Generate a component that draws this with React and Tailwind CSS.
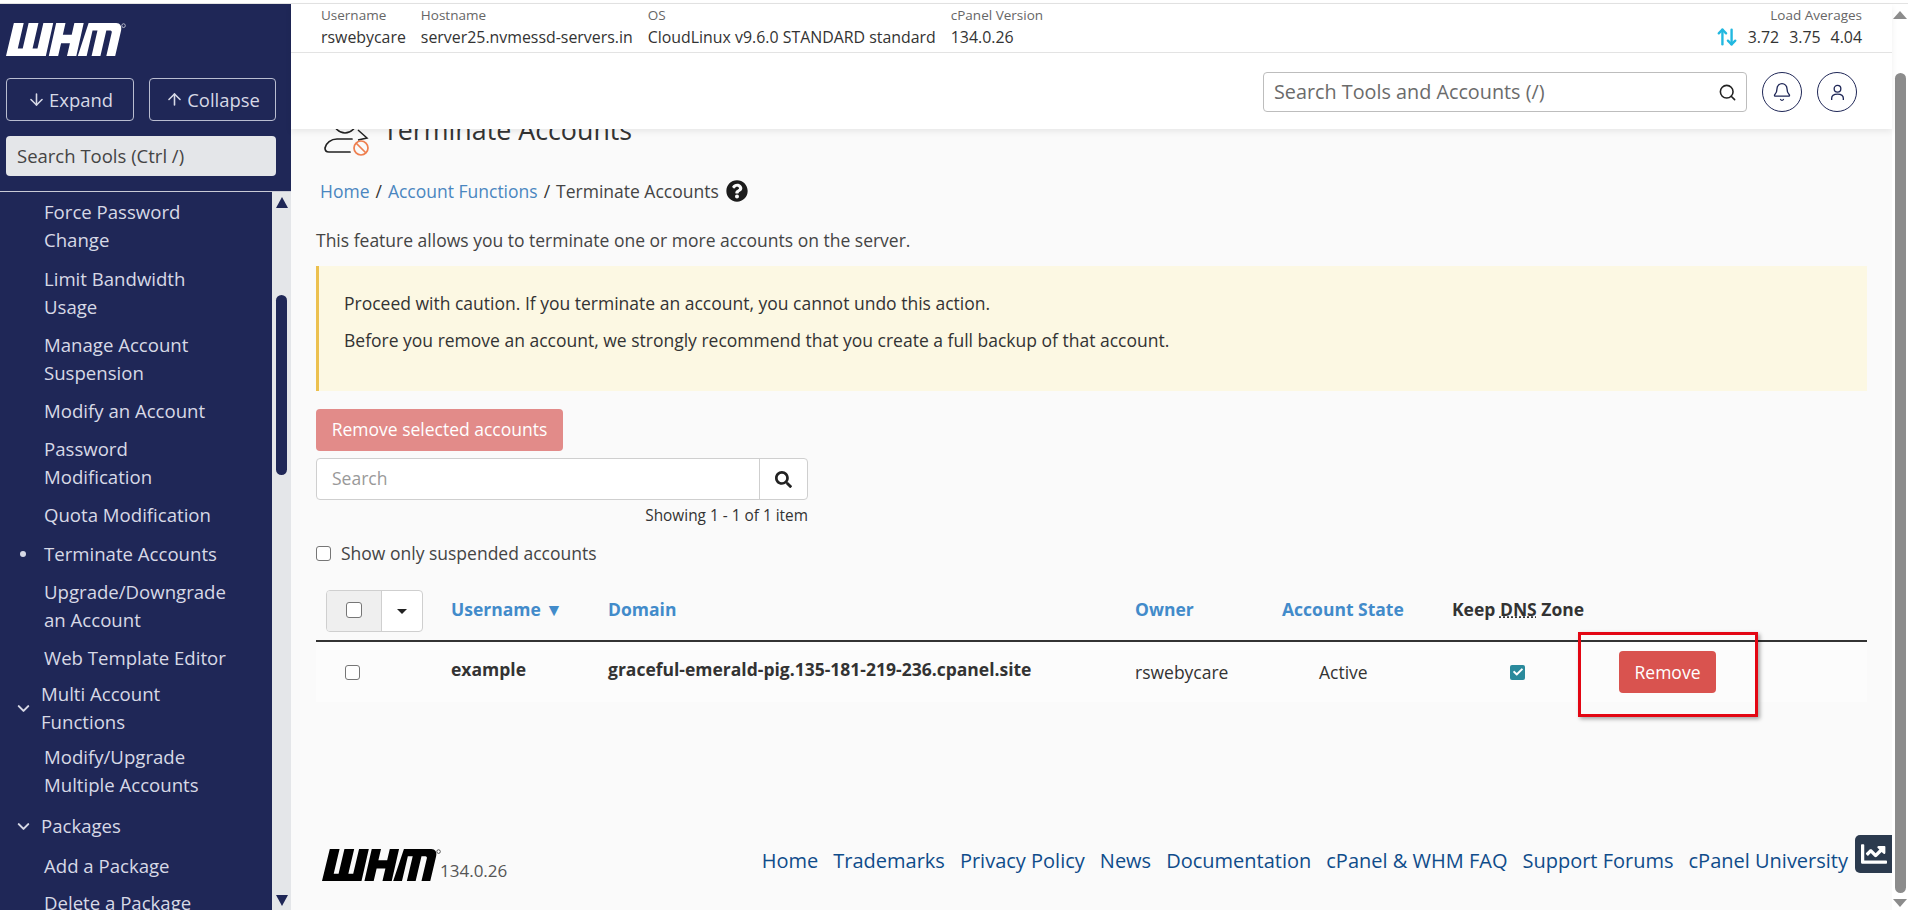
import React from "react";
import { ArrowDown, ArrowUp, ArrowUpDown, Search, Bell, ChevronDown } from "lucide-react";
import { FaQuestionCircle, FaSearch, FaChartLine, FaCheck } from "react-icons/fa";

function WhmLogo({ color, className }) {
  return (
    <svg viewBox="0 0 122 31" preserveAspectRatio="none" className={className} fill={color} role="img" aria-label="WHM">
      <path d="M8 0h10l-6 24h5l6-24h10l-6 24h5l6-24h10l-7.5 31H0z" />
      <path d="M51 0h9.5l-2.7 11h9l2.7-11h9.5l-7.5 31h-9.5l3-12h-9l-3 12h-9.5z" />
      <path d="M84 0h28c4 0 6 3 5 7l-6 24h-9l5.5-22c.3-1-.3-2-1.5-2h-4l-6 24h-9l6-24h-5l-6 24h-9z" />
      <circle cx="119.5" cy="2.5" r="1.8" fill="none" stroke={color} strokeWidth="0.6" />
    </svg>
  );
}

function UserBlockIcon() {
  return (
    <svg viewBox="0 0 48 48" className="w-[48px] h-[48px] shrink-0" fill="none">
      <circle cx="23" cy="13" r="11" stroke="#222" strokeWidth="1.6" />
      <path d="M36 21l9 8-9 2" stroke="#222" strokeWidth="1.5" />
      <path d="M28 43H7c-3 0-4-2-4-4 1-5 6-9 12-9h15" stroke="#222" strokeWidth="1.7" strokeLinecap="round" />
      <circle cx="39" cy="39" r="7" stroke="#ee7f4f" strokeWidth="1.7" fill="#fafafa" />
      <path d="M34 34l10 10" stroke="#ee7f4f" strokeWidth="1.7" />
    </svg>
  );
}

function NavItem({ lines, mt = "mt-[10px]", active }) {
  return (
    <div className={`relative pl-[44px] text-[18.6px] leading-[28px] text-[#d7d9e6] ${mt}`}>
      {active && <span className="absolute left-[20px] top-[11px] w-[6px] h-[6px] rounded-full bg-[#d7d9e6]" />}
      {lines.map((l) => (
        <div key={l}>{l}</div>
      ))}
    </div>
  );
}

function NavGroup({ lines, mt }) {
  return (
    <div className={`relative flex items-center pl-[41px] text-[18.6px] leading-[28px] text-[#d7d9e6] ${mt}`}>
      <ChevronDown className="absolute left-[14px] w-[19px] h-[19px]" strokeWidth={2.6} />
      <div>
        {lines.map((l) => (
          <div key={l}>{l}</div>
        ))}
      </div>
    </div>
  );
}

function Info({ label, value, className = "" }) {
  return (
    <div className={`flex flex-col ${className}`}>
      <span className="text-[13.5px] leading-[22px] text-[#666]">{label}</span>
      <span className="text-[15.9px] leading-[22px] text-[#333]">{value}</span>
    </div>
  );
}

const footerLinks = [
  "Home",
  "Trademarks",
  "Privacy Policy",
  "News",
  "Documentation",
  "cPanel & WHM FAQ",
  "Support Forums",
  "cPanel University",
];

function Box({ className = "w-[15px] h-[15px]" }) {
  return <span className={`block rounded-[3px] border border-[#767676] bg-white ${className}`} />;
}

export default function App() {
  return (
    <div
      className="relative w-[1908px] h-[910px] overflow-hidden flex flex-col bg-white text-[#333]"
      style={{ fontFamily: '"Open Sans", sans-serif' }}
    >
      <div className="h-[4px] shrink-0 bg-white border-b border-[#e3e3e3]" />
      <div className="flex flex-1 min-h-0">
        {/* Sidebar */}
        <aside className="w-[291px] shrink-0 flex flex-col bg-[#1f2757]">
          <div className="h-[188px] shrink-0 px-[6px] pt-[19px] border-b border-[#c9cbd6]">
            <WhmLogo color="#ffffff" className="w-[120px] h-[33px]" />
            <div className="flex gap-[15px] mt-[22px]">
              <button className="w-[128px] h-[43px] flex items-center justify-center gap-[3px] rounded-[4px] border border-[#b9bdd0] text-[18.4px] text-[#d7d9e6]">
                <ArrowDown className="w-[19px] h-[19px]" />
                Expand
              </button>
              <button className="w-[127px] h-[43px] flex items-center justify-center gap-[3px] rounded-[4px] border border-[#b9bdd0] text-[18.4px] text-[#d7d9e6]">
                <ArrowUp className="w-[19px] h-[19px]" />
                Collapse
              </button>
            </div>
            <div className="w-[270px] h-[40px] mt-[15px] flex items-center px-[11px] rounded-[4px] bg-[#e4e6e9] text-[18.5px] text-[#444]">
              Search Tools (Ctrl /)
            </div>
          </div>
          <div className="flex flex-1 min-h-0">
            <nav className="flex-1 min-w-0 overflow-hidden pt-[6px]">
              <NavItem mt="mt-0" lines={["Force Password", "Change"]} />
              <NavItem mt="mt-[11px]" lines={["Limit Bandwidth", "Usage"]} />
              <NavItem lines={["Manage Account", "Suspension"]} />
              <NavItem lines={["Modify an Account"]} />
              <NavItem lines={["Password", "Modification"]} />
              <NavItem lines={["Quota Modification"]} />
              <NavItem lines={["Terminate Accounts"]} active mt="mt-[11px]" />
              <NavItem lines={["Upgrade/Downgrade", "an Account"]} />
              <NavItem lines={["Web Template Editor"]} />
              <NavGroup mt="mt-[8px]" lines={["Multi Account", "Functions"]} />
              <NavItem mt="mt-[7px]" lines={["Modify/Upgrade", "Multiple Accounts"]} />
              <NavGroup mt="mt-[13px]" lines={["Packages"]} />
              <NavItem mt="mt-[12px]" lines={["Add a Package"]} />
              <NavItem mt="mt-[9px]" lines={["Delete a Package"]} />
            </nav>
            <div className="w-[19px] shrink-0 bg-[#e4e6e9] relative flex flex-col items-center">
              <span className="mt-[5px] w-0 h-0 border-x-[6px] border-x-transparent border-b-[11px] border-b-[#1f2757]" />
              <span className="mt-[87px] w-[11px] h-[180px] rounded-full bg-[#1f2757]" />
              <span className="mt-auto mb-[4px] w-0 h-0 border-x-[6px] border-x-transparent border-t-[11px] border-t-[#1f2757]" />
            </div>
          </div>
        </aside>

        {/* Main column */}
        <div className="flex-1 min-w-0 flex flex-col bg-[#fafafa]">
          <header className="shrink-0 bg-white relative z-10 shadow-[0_3px_6px_rgba(0,0,0,0.07)]">
            <div className="h-[49px] flex items-start justify-between pl-[30px] pr-[30px] border-b border-[#e3e3e3]">
              <div className="flex gap-[15px]">
                <Info label="Username" value="rswebycare" />
                <Info label="Hostname" value="server25.nvmessd-servers.in" />
                <Info label="OS" value="CloudLinux v9.6.0 STANDARD standard" />
                <Info label="cPanel Version" value="134.0.26" />
              </div>
              <div className="flex flex-col items-end">
                <span className="text-[13.5px] leading-[22px] text-[#666]">Load Averages</span>
                <span className="flex items-center gap-[10px] text-[15.9px] leading-[22px] text-[#333]">
                  <ArrowUpDown className="w-[22px] h-[22px] text-[#22b8e0]" strokeWidth={2.6} />
                  <span>3.72</span>
                  <span>3.75</span>
                  <span>4.04</span>
                </span>
              </div>
            </div>
            <div className="h-[76px] flex items-start justify-end pt-[19px] pr-[35px] gap-[15px]">
              <div className="w-[484px] h-[40px] flex items-center justify-between pl-[10px] pr-[9px] rounded-[4px] border border-[#bdbdbd] text-[19.8px] text-[#6b6b6b]">
                Search Tools and Accounts (/)
                <Search className="w-[19px] h-[19px] text-[#222]" strokeWidth={2} />
              </div>
              <div className="w-[40px] h-[40px] rounded-full border border-[#1f2757] flex items-center justify-center">
                <Bell className="w-[20px] h-[20px] text-[#1f2757]" strokeWidth={1.6} />
              </div>
              <div className="w-[40px] h-[40px] rounded-full border border-[#1f2757] flex items-center justify-center">
                <svg viewBox="0 0 18 20" className="w-[15px] h-[19px]" fill="none" stroke="#1f2757" strokeWidth="1.6">
                  <circle cx="9" cy="5.5" r="4" />
                  <path d="M2 19v-2c0-3 3-5 7-5s7 2 7 5v2" />
                </svg>
              </div>
            </div>
          </header>

          <main className="flex-1 min-h-0 overflow-hidden pl-[25px] pr-[25px] flex flex-col">
            <div className="flex items-center -mt-[20px] h-[48px] pl-[6px] gap-[13px]">
              <UserBlockIcon />
              <h1 className="text-[26.8px] leading-[36px] -mt-[6px] text-[#333]">Terminate Accounts</h1>
            </div>
            <div className="flex items-center mt-[21px] pl-[4px] h-[26px] text-[17.5px]">
              <span className="text-[#4a86c0]">Home</span>
              <span className="ml-[6px] text-[#333]">/</span>
              <span className="ml-[6px] text-[#4a86c0]">Account Functions</span>
              <span className="ml-[6px] text-[#333]">/</span>
              <span className="ml-[6px] text-[#444]">Terminate Accounts</span>
              <FaQuestionCircle className="ml-[7px] w-[22px] h-[22px] text-[#1c1c1c]" />
            </div>
            <p className="mt-[23px] text-[17.5px] leading-[26px] text-[#444]">
              This feature allows you to terminate one or more accounts on the server.
            </p>
            <div className="mt-[13px] h-[125px] border-l-[3px] border-[#ecc04e] bg-[#fcf8e3] pl-[25px] pt-[24px] text-[17.5px] leading-[26px] text-[#333]">
              <p>Proceed with caution. If you terminate an account, you cannot undo this action.</p>
              <p className="mt-[11px]">Before you remove an account, we strongly recommend that you create a full backup of that account.</p>
            </div>
            <button className="mt-[18px] w-[247px] h-[42px] pb-[2px] rounded-[4px] bg-[#e28b89] text-white text-[17.5px]">
              Remove selected accounts
            </button>
            <div className="mt-[7px] w-[492px] h-[42px] flex rounded-[4px] border border-[#cfcfcf] bg-white">
              <div className="flex-1 flex items-center pl-[15px] pb-[2px] text-[17.5px] text-[#999]">Search</div>
              <div className="w-[48px] border-l border-[#cfcfcf] flex items-center justify-center">
                <FaSearch className="w-[17px] h-[17px] text-[#222]" />
              </div>
            </div>
            <div className="mt-[5px] w-[492px] text-right text-[15.4px] leading-[22px] font-medium text-[#333]">
              Showing 1 - 1 of 1 item
            </div>
            <label className="mt-[13px] flex items-center gap-[10px] text-[17.5px] leading-[26px] text-[#444]">
              <Box />
              Show only suspended accounts
            </label>

            {/* Table */}
            <div className="mt-[24px] relative">
              <div className="h-[52px] flex items-start text-[17.5px] font-bold text-[#428bca] border-b-2 border-[#333]">
                <div className="w-[135px] pl-[10px] shrink-0">
                  <div className="w-[97px] h-[42px] flex rounded-[4px] border border-[#cfcfcf] bg-white overflow-hidden">
                    <div className="w-[55px] bg-[#efefef] border-r border-[#cfcfcf] flex items-center justify-center pb-[3px]">
                      <Box className="w-[16px] h-[16px]" />
                    </div>
                    <div className="flex-1 flex items-center justify-center">
                      <span className="w-0 h-0 border-x-[5px] border-x-transparent border-t-[5px] border-t-[#222]" />
                    </div>
                  </div>
                </div>
                <div className="w-[157px] shrink-0 pt-[6px]">Username ▼</div>
                <div className="w-[527px] shrink-0 pt-[6px]">Domain</div>
                <div className="w-[147px] shrink-0 pt-[6px]">Owner</div>
                <div className="w-[170px] shrink-0 pt-[6px]">Account State</div>
                <div className="shrink-0 pt-[6px] text-[#333]">
                  Keep <span className="underline decoration-dotted">DNS</span> Zone
                </div>
              </div>
              <div className="h-[60px] flex items-center bg-[#fcfcfc] text-[17.5px] text-[#333]">
                <div className="w-[135px] pl-[29px] shrink-0">
                  <Box />
                </div>
                <div className="w-[157px] shrink-0 font-bold -mt-[6px]">example</div>
                <div className="w-[527px] shrink-0 font-bold -mt-[6px]">graceful-emerald-pig.135-181-219-236.cpanel.site</div>
                <div className="w-[147px] shrink-0">rswebycare</div>
                <div className="w-[170px] shrink-0 pl-[37px]">Active</div>
                <div className="w-[167px] shrink-0 pl-[58px]">
                  <span className="w-[15px] h-[15px] rounded-[2px] bg-[#2a8a9c] flex items-center justify-center">
                    <FaCheck className="w-[10px] h-[10px] text-white" />
                  </span>
                </div>
                <button className="w-[97px] h-[42px] rounded-[4px] bg-[#d9534f] text-white text-[17.5px]">Remove</button>
              </div>
              <div className="absolute left-[1262px] top-[42px] w-[180px] h-[85px] border-[3px] border-[#e30613] shadow-[2px_2px_4px_rgba(0,0,0,0.35)]" />
            </div>

            {/* Footer */}
            <footer className="mt-[145px] relative flex items-start justify-between h-[50px] pr-[19px]">
              <div className="flex items-start pl-[6px] pt-[2px]">
                <WhmLogo color="#000000" className="w-[119px] h-[32px]" />
                <span className="-ml-[1px] mt-[10px] text-[17px] leading-[24px] text-[#555]">134.0.26</span>
              </div>
              <div className="flex gap-[15px] text-[20px] leading-[28px] text-[#0f4c8a]">
                {footerLinks.map((l) => (
                  <span key={l}>{l}</span>
                ))}
              </div>
            </footer>
          </main>
        </div>

        {/* Page scrollbar */}
        <div className="w-[16px] shrink-0 bg-white relative flex flex-col items-center">
          <span className="mt-[7px] w-0 h-0 border-x-[7px] border-x-transparent border-b-[8px] border-b-[#8c8c8c]" />
          <span className="mt-[54px] w-[11px] h-[820px] rounded-full bg-[#8c8c8c]" />
          <span className="mt-[6px] w-0 h-0 border-x-[7px] border-x-transparent border-t-[8px] border-t-[#8c8c8c]" />
        </div>
      </div>

      <div className="absolute left-[1855px] top-[835px] w-[37px] h-[38px] rounded-l-[5px] bg-[#2b3a4e] flex items-center justify-center">
        <FaChartLine className="w-[26px] h-[26px] text-white" />
      </div>
    </div>
  );
}
